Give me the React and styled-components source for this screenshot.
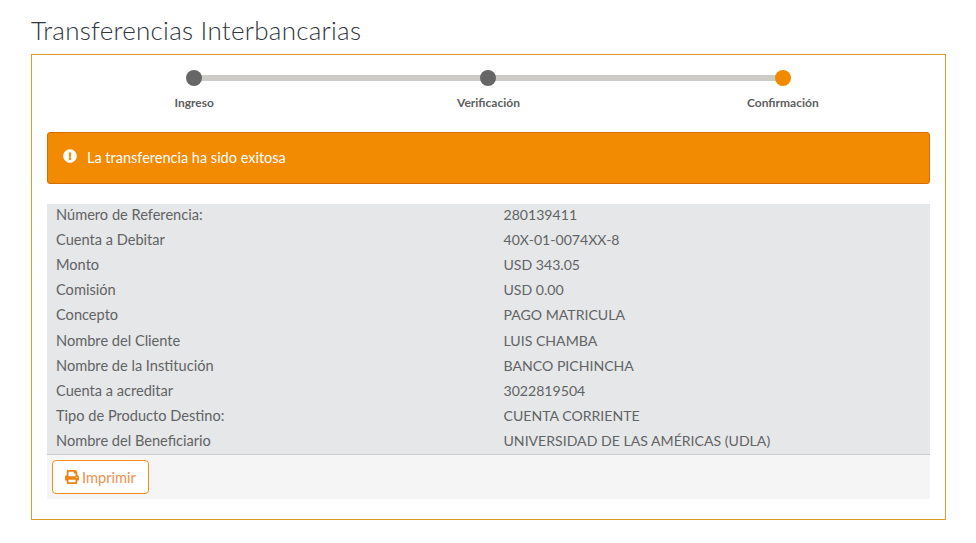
import React from "react";
import styled, { createGlobalStyle } from "styled-components";
import { FaExclamationCircle, FaPrint } from "react-icons/fa";

const GlobalStyle = createGlobalStyle`
  html, body {
    margin: 0;
    background: #ffffff;
    font-family: "Lato", "Liberation Sans", sans-serif;
    color: #58595b;
  }
`;

const Page = styled.div`
  width: 976px;
  height: 543px;
  box-sizing: border-box;
  padding: 14px 30px 0 31px;
  overflow: hidden;
`;

const Title = styled.h1`
  margin: 0 0 7px;
  height: 33px;
  line-height: 33px;
  font-size: 26px;
  font-weight: 300;
  letter-spacing: 0.26px;
  color: #2f353b;
`;

const Panel = styled.div`
  box-sizing: border-box;
  height: 466px;
  border: 1px solid #dc9a2c;
  padding: 15px 15px 20px;
`;

const Steps = styled.div`
  display: grid;
  grid-template-columns: repeat(3, 1fr);
  height: 62px;
`;

const Step = styled.div`
  position: relative;
  display: flex;
  flex-direction: column;
  align-items: center;
  gap: 9px;

  &:not(:last-child):after {
    content: "";
    position: absolute;
    left: 50%;
    top: 5px;
    width: 100%;
    height: 6px;
    background: #cdcbc7;
  }
`;

const Dot = styled.div`
  position: relative;
  z-index: 1;
  width: 16px;
  height: 16px;
  border-radius: 50%;
  background: ${(props) => (props.active ? "#f28a00" : "#666666")};
`;

const StepLabel = styled.span`
  font-size: 12px;
  line-height: 16px;
  font-weight: 700;
  color: #5d5e60;
`;

const Alert = styled.div`
  box-sizing: border-box;
  height: 52px;
  display: flex;
  align-items: center;
  gap: 10px;
  padding: 0 15px 1px;
  background: #f28a02;
  border: 1px solid #d66d00;
  border-radius: 3px;
  color: #ffffff;
  font-size: 14.5px;

  svg {
    width: 14px;
    height: 14px;
    margin-top: -4px;
  }
`;

const Details = styled.div`
  margin-top: 20px;
  background: #e6e7e8;
  height: 250px;
  box-sizing: border-box;
`;

const Row = styled.div`
  display: grid;
  grid-template-columns: 1fr 1fr;
  height: 25.12px;
  line-height: 22px;
  color: #626365;
`;

const Label = styled.div`
  padding-left: 9px;
  font-size: 14.6px;
`;

const Value = styled.div`
  padding-left: 15px;
  font-size: 14.1px;
`;

const Footer = styled.div`
  box-sizing: border-box;
  height: 45px;
  padding: 5px;
  background: #f5f5f5;
  border-top: 1px solid #cccccc;
`;

const PrintButton = styled.button`
  box-sizing: border-box;
  width: 97px;
  height: 34px;
  display: flex;
  align-items: center;
  justify-content: center;
  gap: 3px;
  background: #ffffff;
  border: 1px solid #ee8f1e;
  border-radius: 4px;
  color: #ee9150;
  font-family: inherit;
  font-size: 14.6px;
  padding: 0;

  svg {
    width: 14px;
    height: 14px;
    color: #ee8213;
  }
`;

const steps = [
  { label: "Ingreso" },
  { label: "Verificación" },
  { label: "Confirmación", active: true },
];

const rows = [
  ["Número de Referencia:", "280139411"],
  ["Cuenta a Debitar", "40X-01-0074XX-8"],
  ["Monto", "USD 343.05"],
  ["Comisión", "USD 0.00"],
  ["Concepto", "PAGO MATRICULA"],
  ["Nombre del Cliente", "LUIS CHAMBA"],
  ["Nombre de la Institución", "BANCO PICHINCHA"],
  ["Cuenta a acreditar", "3022819504"],
  ["Tipo de Producto Destino:", "CUENTA CORRIENTE"],
  ["Nombre del Beneficiario", "UNIVERSIDAD DE LAS AMÉRICAS (UDLA)"],
];

const App = () => {
  return (
    <Page>
      <GlobalStyle />
      <Title>Transferencias Interbancarias</Title>
      <Panel>
        <Steps>
          {steps.map((step) => (
            <Step key={step.label}>
              <Dot active={step.active} />
              <StepLabel>{step.label}</StepLabel>
            </Step>
          ))}
        </Steps>
        <Alert>
          <FaExclamationCircle />
          <span>La transferencia ha sido exitosa</span>
        </Alert>
        <Details>
          {rows.map(([label, value]) => (
            <Row key={label}>
              <Label>{label}</Label>
              <Value>{value}</Value>
            </Row>
          ))}
        </Details>
        <Footer>
          <PrintButton>
            <FaPrint />
            Imprimir
          </PrintButton>
        </Footer>
      </Panel>
    </Page>
  );
};

export default App;
